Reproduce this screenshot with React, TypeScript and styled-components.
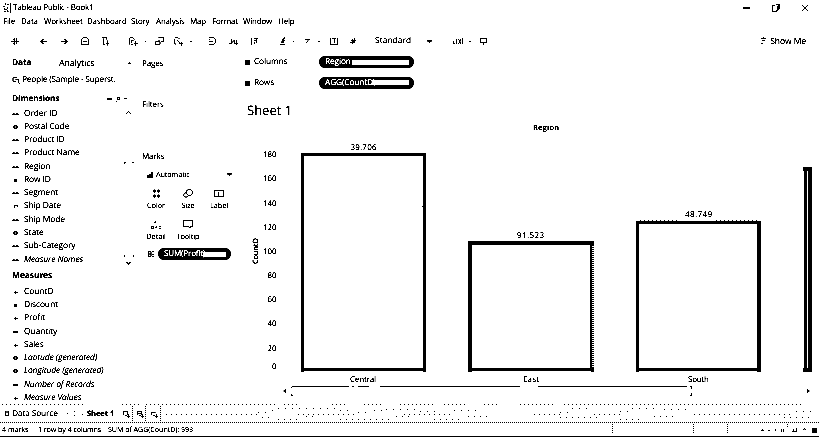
import React from "react";
import styled, { createGlobalStyle } from "styled-components";

const Global = createGlobalStyle`
  * { box-sizing: border-box; }
  html, body { margin: 0; background: #fff; }
  body { width: 819px; height: 437px; overflow: hidden; color: #000;
    font-family: "Open Sans", "Noto Sans", sans-serif; font-size: 8px; line-height: 12px;
    text-rendering: geometricPrecision; }
`;

const Window = styled.div`
  width: 819px; height: 437px; overflow: hidden; background: #fff;
  display: grid; grid-template-rows: 14px 14px 26px 350px 19px 14px;
  filter: grayscale(1) brightness(0.78) contrast(8);
`;

const Label = styled.span<{ $w?: number; $size?: number; $ls?: number; $bold?: boolean; $italic?: boolean }>`
  display: block; white-space: nowrap; flex: none;
  width: ${p => (p.$w ? p.$w + "px" : "auto")};
  font-size: ${p => p.$size ?? 8.3}px;
  letter-spacing: ${p => p.$ls ?? -0.12}px;
  font-weight: ${p => (p.$bold ? 700 : 400)};
  font-style: ${p => (p.$italic ? "italic" : "normal")};
`;

const TitleBar = styled.header`
  display: flex; align-items: center; padding: 1px 10px 0 3px; gap: 2px;
`;
const WindowButtons = styled.div`
  margin-left: auto; display: flex; gap: 22px; align-items: center; padding-right: 1px;
`;
const MenuBar = styled.nav`
  display: grid; align-items: center; padding: 1px 0 0 3px;
  grid-template-columns: 18px 23px 43px 44px 25px 34px 22px 31px 35px 20px;
`;
const Toolbar = styled.div`
  display: flex; align-items: center; padding: 0 13px 0 0;
`;
const Tool = styled.div<{ $w: number }>`
  width: ${p => p.$w}px; flex: none; display: flex; justify-content: flex-end; align-items: center;
`;
const ShowMe = styled.div`
  margin-left: auto; display: flex; align-items: center; gap: 4px;
`;
const Svg = styled.svg`
  display: block; flex: none; fill: none; stroke: #000; stroke-width: 0.8; overflow: visible;
`;

const Body = styled.main`
  display: grid; grid-template-columns: 138px 104px 577px; min-height: 0;
`;
const DataPane = styled.aside`
  display: flex; flex-direction: column; padding: 2px 0 0 12px; overflow: hidden;
`;
const PaneTabs = styled.div`
  display: flex; height: 13px; align-items: center;
`;
const Source = styled.div`
  display: flex; height: 21px; padding-top: 1px; align-items: center; gap: 2px;
`;
const Heading = styled.div<{ $h: number; $top?: number }>`
  display: flex; height: ${p => p.$h}px; padding-top: ${p => p.$top ?? 0}px; align-items: center; gap: 4px;
`;
const FieldArea = styled.div`
  display: grid; grid-template-columns: 112px 14px;
`;
const Field = styled.div`
  display: flex; height: 13.27px; align-items: center;
`;
const FieldIcon = styled.div`
  width: 12px; flex: none;
`;
const FieldScroll = styled.div`
  display: flex; flex-direction: column; justify-content: space-between; padding: 3px 0 1px;
`;
const ScrollTop = styled.div`
  height: 78px; display: flex; flex-direction: column;
`;
const ScrollGap = styled.div`
  height: 46px;
`;

const Cards = styled.aside`
  display: flex; flex-direction: column; padding: 3.5px 0 0 4px;
`;
const Card = styled.section<{ $h: number }>`
  height: ${p => p.$h}px; flex: none;
`;
const MarkType = styled.div`
  display: flex; align-items: center; gap: 3px; height: 24px; padding: 0 13px 0 5px;
`;
const MarkGrid = styled.div`
  display: grid; grid-template-columns: 28px 36px 26px; grid-auto-rows: 31px; padding-top: 2px; height: 61px;
`;
const MarkButton = styled.div`
  display: flex; flex-direction: column; align-items: center; gap: 2px;
`;
const MarkPillRow = styled.div`
  display: flex; align-items: center; gap: 4px; height: 13px; padding-left: 6px;
`;
const Pill = styled.div<{ $w: number }>`
  width: ${p => p.$w}px; height: 12px; flex: none; border-radius: 6px; background: #000; color: #fff;
  display: flex; align-items: center; padding: 0 5px 0 6px;
  -webkit-text-stroke: 0.35px #fff;
`;
const PillFill = styled.i`
  flex: 1; height: 5px; background: #fff; border-radius: 1px;
`;

const View = styled.section`
  display: flex; flex-direction: column; min-width: 0;
`;
const Shelf = styled.div`
  display: flex; align-items: center; height: 20.5px; padding-left: 3px; gap: 3px;
  &:first-child { margin-top: -2px; }
`;
const Title = styled.h1`
  margin: 8px 0 0 5px; font-size: 13px; font-weight: 400; line-height: 18px; height: 23px;
`;
const Chart = styled.svg`
  display: block; margin-left: -2px; width: 579px; height: 281px; font-size: 8px; overflow: visible;
`;

const SheetTabs = styled.footer`
  display: grid; grid-template-columns: 87px 36px 41px 1fr; align-items: center;
`;
const SourceTab = styled.div`
  display: flex; align-items: center; gap: 3px; padding-left: 5px;
`;
const SheetActions = styled.div`
  display: flex; gap: 7px;
`;
const Status = styled.footer`
  display: flex; align-items: center; padding: 0 1px 0 2px; border-bottom: 1px solid #000;
`;
const StatusNav = styled.div`
  margin-left: auto; display: flex; align-items: center;
`;

const tools: [number, number, React.ReactNode][] = [
  [15, 8, <path d="M0 4.500h8M3.500 1v7M5.500 1v6M1.500 3l2-1.500M1.500 6l2 1" />],
  [43, 7, <path d="M7 4.500H1M3.500 2 1 4.500l2.500 2.500" strokeWidth="1" />],
  [64, 7, <path d="M0 4.500h6M3.500 2 6 4.500 3.500 7" strokeWidth="1" />],
  [85, 8, <path d="M.5 7.500V2.500L2 .5h4l1.500 2v5zM2 4.500h4" />],
  [105, 7, <path d="M0 .5h4.500v2M1.500 1.500v6H3M5.500 3.500v5M4 6.500h3" />],
  [133, 9, <path d="M.5 7.500V1.500L2 .5h2l1.500 2M2.500 6V3.500h2M6.500 4v5M5 6.500h4M2 7.500h2" />],
  [145, 2, <path d="M1 4.500h1" />],
  [159, 9, <path d="M3.500 .500h5v4H6M1 4.500h4v3H.5v-3M3 4.500l2-2" />],
  [178, 9, <path d="M1 .500h3L6 2.500M.5 2v5h2M3 3l3 3M7.500 5v4M5 6.500h4" />],
  [191, 2, <path d="M0 4.500h2" />],
  [212, 7, <path d="M0 .500h5l1.500 2v3l-1.500 2H0M0 4.500h4M.5 2v1" />],
  [233, 9, <path d="M0 6.500h3M2.500 2v4l3-3v4M7.500 3v5M6 6.500h3" />],
  [254, 8, <path d="M1.500 1v7M4 1.500h4M4 3.500h3M4.500 5v2M6.500 2v4" />],
  [283, 6, <path d="M0 7.500h5M1.500 6l2-5h2M2 3.500h3M3 2v4" strokeWidth="1" />],
  [293, 1, <path d="M0 4.500h1" />],
  [307, 5, <path d="M0 2.500h5M1 1.500l2 2-2 3" />],
  [319, 2, <path d="M0 4.500h2" />],
  [334, 8, <path d="M.5 1v6.500h7V1M2 1.500h4M4.500 2v4" />],
  [353, 6, <path strokeWidth="1.1" d="M0 5.500h5M1 3.500h5M2.500 2v5M4.500 1v5M3 4.500h2" />],
];

const Ico = ({ w, h = 8, children }: { w: number; h?: number; children: React.ReactNode }) => (
  <Svg width={w} height={h} viewBox={`0 0 ${w} ${h}`}>{children}</Svg>
);
const Down = () => <Ico w={5} h={3}><path d="M0 0h5v1L2.500 3 0 1z" fill="#000" stroke="none" /></Ico>;

const glyphs: Record<string, React.ReactNode> = {
  abc: <path d="M0 4.500h7M1 3.500h1.500M4 3.500h2" />,
  geo: <circle cx="3.500" cy="4" r="1.500" strokeWidth="1.400" />,
  num: <path d="M2 4.500h3.500M3.500 3v3" strokeWidth="1.200" />,
  dot: <circle cx="3.500" cy="4.500" r="1.700" fill="#000" stroke="none" />,
  date: <path d="M2.500 6V3.500h3v1.500" strokeWidth="1.100" />,
  wide: <path d="M1.500 4h4" strokeWidth="2" />,
};

type F = [string, string, number?];
const dims: F[] = [["abc", "Order ID"], ["geo", "Postal Code"], ["abc", "Product ID"], ["abc", "Product Name"], ["abc", "Region"], ["dot", "Row ID"], ["abc", "Segment"], ["date", "Ship Date"], ["abc", "Ship Mode"], ["geo", "State"], ["abc", "Sub-Category"], ["abc", "Measure Names", 1]];
const meas: F[] = [["num", "CountD"], ["dot", "Discount"], ["num", "Profit"], ["wide", "Quantity"], ["num", "Sales"], ["geo", "Latitude (generated)", 1], ["geo", "Longitude (generated)", 1], ["wide", "Number of Records", 1], ["num", "Measure Values", 1]];

const Fields = ({ list }: { list: F[] }) => (
  <div>
    {list.map(([g, t, it]) => (
      <Field key={t}>
        <FieldIcon><Ico w={7}>{glyphs[g]}</Ico></FieldIcon>
        <Label $italic={!!it} $size={8.5} $ls={it ? -0.12 : -0.14}>{t}</Label>
      </Field>
    ))}
  </div>
);

const ticks: [string, number][] = [["180", 154], ["160", 178], ["140", 202.5], ["120", 227], ["100", 251], ["80", 275], ["60", 299], ["40", 323], ["20", 347.5], ["0", 366]];

const FieldShelf = ({ name, field, w }: { name: string; field: string; w: number }) => (
  <Shelf>
    <Ico w={6} h={6}><path d="M0 1h5v5H0z" fill="#000" stroke="none" /></Ico>
    <Label $w={62}>{name}</Label>
    <Pill $w={95}><Label $w={w}>{field}</Label><PillFill /></Pill>
  </Shelf>
);

export default function App() {
  let x = 0;
  return (
    <>
      <Global />
      <Window>
        <TitleBar>
          <Ico w={8} h={10}><path d="M0 3.500h3M2.500 0v3M4 1.500h2M1.500 5v3.500h4M4.500 4v5M2 6.500h2" strokeDasharray="2 1" /><path d="M7.500 0v10" /></Ico>
          <Label $size={8} $ls={-0.18}>Tableau Public - Book1</Label>
          <WindowButtons>
            <Ico w={7}><path d="M0 4h7" strokeWidth="1.5" /></Ico>
            <Ico w={8}><path d="M2.500 1.500H.5v6H4L5.500 6M4 .5h3v4L5.500 6V2" strokeWidth="1.1" /></Ico>
            <Ico w={6}><path d="m0 1 6 6M6 1 0 7" strokeWidth="1" /></Ico>
          </WindowButtons>
        </TitleBar>
        <MenuBar>
          {["File", "Data", "Worksheet", "Dashboard", "Story", "Analysis", "Map", "Format", "Window", "Help"].map(t => (
            <Label key={t} $size={8} $ls={-0.18}>{t}</Label>
          ))}
        </MenuBar>
        <Toolbar>
          {tools.map(([c, w, g], i) => {
            const end = Math.round(c + w / 2);
            const cell = end - x;
            x = end;
            return <Tool key={i} $w={cell}><Ico w={w}>{g}</Ico></Tool>;
          })}
          <Tool $w={56}><Label $w={37} $ls={0.1}>Standard</Label></Tool>
          <Tool $w={20}><Down /></Tool>
          <Tool $w={31}><Ico w={10}><path d="M.5 4v3M3.500 2v5M5.500 2l2.500 5M8 2 5.500 7M9.500 1v6M0 6.500h2" /></Ico></Tool>
          <Tool $w={8}><Ico w={2}><path d="M0 4.500h2" strokeWidth="1" /></Ico></Tool>
          <Tool $w={17}><Ico w={8}><path d="M.5 1.500h6v4h-6zM3.500 5v3" strokeWidth="1" /></Ico></Tool>
          <ShowMe>
            <Ico w={5}><path d="M0 1.500h5M1 3.500h3M0 6.500h2M2.500 0v2" /></Ico>
            <Label $size={8.6}>Show Me</Label>
          </ShowMe>
        </Toolbar>
        <Body>
          <DataPane>
            <PaneTabs>
              <Label $bold $w={47}>Data</Label>
              <Label $w={69} $size={8.9}>Analytics</Label>
              <Ico w={3} h={3}><path d="M0 2.500h3M1.500 1v1" /></Ico>
            </PaneTabs>
            <Source>
              <Ico w={8}><path d="M5 1.500H1v4h3M3.500 3.500h3v3M6 6l2 2" /></Ico>
              <Label $ls={-0.2}>People (Sample - Superst.</Label>
            </Source>
            <Heading $h={17}>
              <Label $bold $w={91}>Dimensions</Label>
              <Ico w={5} h={6}><path d="M0 3h5" strokeWidth="2" /></Ico>
              <Ico w={4} h={6}><path d="M1.500 4V1.500h2v2H1M0 5.500h1" /></Ico>
              <Ico w={3} h={3}><path d="M0 1.500h3" /></Ico>
            </Heading>
            <FieldArea>
              <Fields list={dims} />
              <FieldScroll>
                <ScrollTop>
                  <Ico w={9} h={6}><path d="m2 4 2.500-2.500L7 4" strokeWidth="1" /></Ico>
                  <ScrollGap />
                  <Ico w={10} h={3}><path d="M0 .5h2M8 .5h2M.5 1v1" /></Ico>
                </ScrollTop>
                <Ico w={10} h={10}><path d="M.5 0v2M9.500 0v2" /><path d="M2 7l2.500 2L7 7" strokeWidth="1.3" /></Ico>
              </FieldScroll>
            </FieldArea>
            <Heading $h={19} $top={0}><Label $bold $size={8.5}>Measures</Label></Heading>
            <Fields list={meas} />
          </DataPane>

          <Cards>
            <Card $h={41}><Label $size={8}>Pages</Label></Card>
            <Card $h={52}><Label $size={8}>Filters</Label></Card>
            <Card $h={12}><Label $size={8}>Marks</Label></Card>
            <MarkType>
              <Ico w={6} h={6}><path d="M0 3h2v-1h2V0h2v6H0z" fill="#000" stroke="none" /></Ico>
              <Label $size={7.3} $w={68}>Automatic</Label>
              <Down />
            </MarkType>
            <MarkGrid>
              <MarkButton>
                <Ico w={9} h={9}><g fill="#000" stroke="none"><circle cx="2.500" cy="2" r="1.500" /><circle cx="6.500" cy="2" r="1.500" /><circle cx="2.500" cy="7" r="1.500" /><circle cx="6.500" cy="7" r="1.500" /></g></Ico>
                <Label $size={7.4}>Color</Label>
              </MarkButton>
              <MarkButton>
                <Ico w={10} h={9}><path d="M3.500 4.500 C2.500 1 5 .500 7 .500S10 3 9 5 5 7 4 5M4 3.500C1 4 0 6 1.500 8H4l2-2" /></Ico>
                <Label $size={7.4}>Size</Label>
              </MarkButton>
              <MarkButton>
                <Ico w={10} h={9}><path d="M.5 1.500h9v6h-9zM4.500 3v4" strokeWidth="1" /></Ico>
                <Label $size={7.4}>Label</Label>
              </MarkButton>
              <MarkButton>
                <Ico w={10} h={9}><path d="M3 2.500h2M4.500 1v2M.5 6.500h2v2h-2zM5.500 6v2M4 7.500h2M8 6.500h2M8 8.500h2" /></Ico>
                <Label $size={7.4}>Detail</Label>
              </MarkButton>
              <MarkButton>
                <Ico w={10} h={9}><path d="M.5.500h9v6H7.500V8L5 6.500H.5z" strokeWidth="1" /></Ico>
                <Label $size={7.4}>Tooltip</Label>
              </MarkButton>
            </MarkGrid>
            <MarkPillRow>
              <Ico w={6} h={6}><path d="M.5.500H3v5H.5zM4 .500h2M4 3.500h2M4 5.500h2M1 3h2" /></Ico>
              <Pill $w={73}><Label $w={39} $size={8}>SUM(Profit)</Label><PillFill /></Pill>
            </MarkPillRow>
          </Cards>

          <View>
            <FieldShelf name="Columns" field="Region" w={27} />
            <FieldShelf name="Rows" field="AGG(CountD)" w={47} />
            <Title>Sheet 1</Title>
            <Chart viewBox="240 124 579 281">
              <g stroke="none" fill="#000">
                <text x="533" y="129.500" fontWeight="600" fontSize="7.500" textLength="26">Region</text>
                {ticks.map(([t, y]) => <text key={t} x="276.500" y={y + 3} textAnchor="end" fontSize="7.800">{t}</text>)}
                <text x="350.500" y="150" textLength="26">39.706</text>
                <text x="517" y="238" textLength="27">91.523</text>
                <text x="685" y="217" textLength="27">48.749</text>
                <text x="350" y="382" textLength="26">Central</text>
                <text x="523" y="382" textLength="16">East</text>
                <text x="688" y="382" textLength="21">South</text>
                <text transform="translate(258 264) rotate(-90)" textLength="26" fontWeight="600" fontSize="7.500">CountD</text>
                <path d="M286 389v4l-3-2zM807 389v4l3-2z" />
                <path fillRule="evenodd" d="M301 153h125v219h-3v-1H304v1h-3zM304 156v212h119V156z" />
                <path fillRule="evenodd" d="M468 241h126v4h-2v123h2v4h-3v-1H472v1h-4zM472 245v123h118V245z" />
                <path fillRule="evenodd" d="M636 221h125v151h-4v-1H639v1h-3zM639 224v144h118V224z" />
                <path fillRule="evenodd" d="M804 167h8v205h-9v-4h1v-197h-1v-3zM807 171v197h1V171z" />
              </g>
              <g stroke="#000" fill="none">
                <path d="M593 245v123" strokeWidth="2" strokeDasharray="1 1" />
                <path d="M640 220.500h40M716 220.500h44" strokeDasharray="1 3" />
                <path d="M292 386.500h57M352 386.500h2M358 386.500h11M380 386.500h140M538 386.500h149M291.500 387v1M291.500 394v1M291 395.500h2M691.500 387v2M691.500 393v2M690 395.500h2M690 386.500h2M422 206.500h1" />
              </g>
            </Chart>
          </View>
        </Body>

        <SheetTabs>
          <SourceTab><Ico w={4} h={5}><path d="M.5 0v4.500h3V0M2 0v2" /></Ico><Label>Data Source</Label></SourceTab>
          <Label $bold $size={7.6}>Sheet 1</Label>
          <SheetActions>
            <Ico w={7}><path d="M.5 5V1.500h4V5M2 5.500h2M5.500 4v4M4 6.500h3" /></Ico>
            <Ico w={7}><path d="M.5 5V1.500h4V5M1 3.500h4M2 5.500h2M5.500 4v4M4 6.500h3" /></Ico>
            <Ico w={7}><path d="M.5 5V2.500h4M2 5.500h2M5.500 4v4M4 6.500h3" /></Ico>
          </SheetActions>
          <Ico w={655} h={19}>
            <g strokeWidth="1">
              <path d="M-162 .5h82M-42 .5h20M-18 .5h132M120 .5h16M168 .5h16M200 .5h18M236 .5h36M280 .5h24M320 .5h16M356 .5h36M400 .5h240" strokeDasharray="1 3" />
              <path d="M2 10.500h92M134 10.500h60M240 10.500h50M370 10.500h26M430 10.500h26M530 10.500h100" strokeDasharray="1 4" />
              <path d="M94 8.500h9M114 4.500h60M108 6.500h6M176 6.500h8M194 8.500h10M210 6.500h10M222 5.500h30M256 7.500h20M290 6.500h26M396 8.500h10M408 4.500h20M456 7.500h10M468 4.500h24M500 5.500h22M632 7.500h20" strokeDasharray="1 6" />
              <path d="M98 13.500h10M114 15.500h24M142 12.500h12M176 15.500h50M232 12.500h18M270 15.500h30M304 12.500h22M396 13.500h40M456 15.500h24M490 12.500h24M620 13.500h25" strokeDasharray="1 5" />
              <path d="M-97 9.500h1M-90 7.500h1M-90 11.500h1M-82 10.500h1" />
              <path d="M-164 18.500h820M-18.500 2v15M-31.500 2v15M-3.500 2v15" strokeDasharray="1 1" />
            </g>
          </Ico>
        </SheetTabs>
        <Status>
          <Label $size={7.2} $w={36} $ls={-0.04}>4 marks</Label>
          <Label $size={7.2} $w={70} $ls={-0.1}>1 row by 4 columns</Label>
          <Label $size={7.2} $ls={-0.08}>SUM of AGG(CountD): 593</Label>
          <StatusNav>
            <Ico w={206} h={11}>
              <path d="M.5 0v10M81.500 0v10M115.500 0v10M175.500 0v4" strokeDasharray="1 1" strokeWidth="1" />
              <path d="M149 6.500h3M150.500 5v2M156 6.500h2M163.500 5v2M169.500 5v3M171.500 5v3M180 7.500h5M181.500 5v3M184.500 4v4M191 6.500l1.500-2L194 6.500" />
              <path d="M200 4h5v5h-5z" fill="#000" stroke="none" />
            </Ico>
          </StatusNav>
        </Status>
      </Window>
    </>
  );
}
